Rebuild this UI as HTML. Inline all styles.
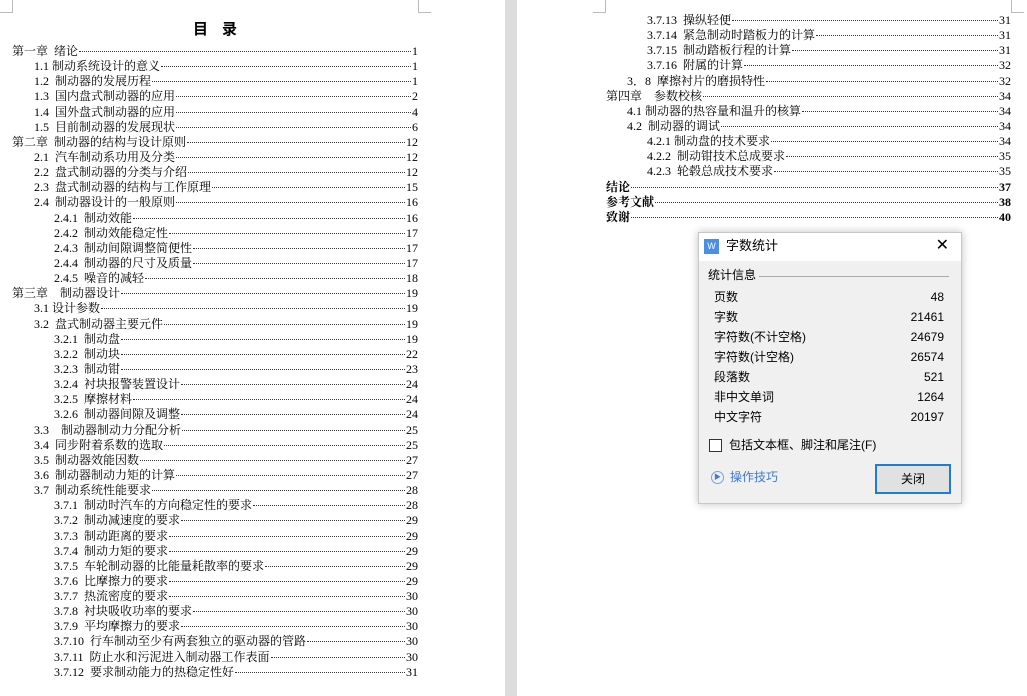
<!DOCTYPE html><html><head><meta charset="utf-8"><style>
body{margin:0;width:1027px;height:696px;overflow:hidden;background:#dcdcdc;font-family:"Liberation Serif","Noto Serif CJK SC","Noto Sans CJK SC",serif;font-size:12px;color:#000;position:relative}
.page{position:absolute;top:0;height:696px;background:#fff}
.toc{position:absolute}
.r{display:flex;height:15.15px;line-height:15.15px;white-space:nowrap;align-items:baseline}
.r .d{flex:1;border-bottom:1px dotted #333;margin:0 1px;transform:translateY(-3px)}
.mark{position:absolute;border-color:#bbb;border-style:solid;width:12px;height:12px}
.b{font-weight:bold}
.dlg{position:absolute;left:698px;top:232px;width:262px;height:270px;background:#f0f0f0;border:1px solid #c8c8c8;box-shadow:0 0 8px rgba(0,0,0,.25);font-family:"Liberation Sans","Noto Sans CJK SC",sans-serif;font-size:12px}
.dlg .t{height:28px;background:#fff;position:relative}
.row{position:absolute;left:15px;width:230px;display:flex;justify-content:space-between;align-items:baseline;line-height:16px}
</style></head><body>
<div class="page" style="left:0;width:505px">
<div class="mark" style="left:0;top:0;border-width:0 1px 1px 0"></div>
<div class="mark" style="left:418px;top:0;border-width:0 0 1px 1px"></div>
<div style="position:absolute;left:193px;top:18px;font-size:15px;font-weight:bold;font-family:'Noto Sans CJK SC',sans-serif;letter-spacing:14px">目录</div>
<div class="toc" style="left:12px;top:44px;width:406px">
<div class="r"><span>第一章&nbsp; 绪论</span><span class="d"></span>1</div>
<div class="r" style="padding-left:22px"><span>1.1 制动系统设计的意义</span><span class="d"></span>1</div>
<div class="r" style="padding-left:22px"><span>1.2&nbsp; 制动器的发展历程</span><span class="d"></span>1</div>
<div class="r" style="padding-left:22px"><span>1.3&nbsp; 国内盘式制动器的应用</span><span class="d"></span>2</div>
<div class="r" style="padding-left:22px"><span>1.4&nbsp; 国外盘式制动器的应用</span><span class="d"></span>4</div>
<div class="r" style="padding-left:22px"><span>1.5&nbsp; 目前制动器的发展现状</span><span class="d"></span>6</div>
<div class="r"><span>第二章&nbsp; 制动器的结构与设计原则</span><span class="d"></span>12</div>
<div class="r" style="padding-left:22px"><span>2.1&nbsp; 汽车制动系功用及分类</span><span class="d"></span>12</div>
<div class="r" style="padding-left:22px"><span>2.2&nbsp; 盘式制动器的分类与介绍</span><span class="d"></span>12</div>
<div class="r" style="padding-left:22px"><span>2.3&nbsp; 盘式制动器的结构与工作原理</span><span class="d"></span>15</div>
<div class="r" style="padding-left:22px"><span>2.4&nbsp; 制动器设计的一般原则</span><span class="d"></span>16</div>
<div class="r" style="padding-left:42px"><span>2.4.1&nbsp; 制动效能</span><span class="d"></span>16</div>
<div class="r" style="padding-left:42px"><span>2.4.2&nbsp; 制动效能稳定性</span><span class="d"></span>17</div>
<div class="r" style="padding-left:42px"><span>2.4.3&nbsp; 制动间隙调整简便性</span><span class="d"></span>17</div>
<div class="r" style="padding-left:42px"><span>2.4.4&nbsp; 制动器的尺寸及质量</span><span class="d"></span>17</div>
<div class="r" style="padding-left:42px"><span>2.4.5&nbsp; 噪音的减轻</span><span class="d"></span>18</div>
<div class="r"><span>第三章&nbsp;&nbsp;&nbsp; 制动器设计</span><span class="d"></span>19</div>
<div class="r" style="padding-left:22px"><span>3.1 设计参数</span><span class="d"></span>19</div>
<div class="r" style="padding-left:22px"><span>3.2&nbsp; 盘式制动器主要元件</span><span class="d"></span>19</div>
<div class="r" style="padding-left:42px"><span>3.2.1&nbsp; 制动盘</span><span class="d"></span>19</div>
<div class="r" style="padding-left:42px"><span>3.2.2&nbsp; 制动块</span><span class="d"></span>22</div>
<div class="r" style="padding-left:42px"><span>3.2.3&nbsp; 制动钳</span><span class="d"></span>23</div>
<div class="r" style="padding-left:42px"><span>3.2.4&nbsp; 衬块报警装置设计</span><span class="d"></span>24</div>
<div class="r" style="padding-left:42px"><span>3.2.5&nbsp; 摩擦材料</span><span class="d"></span>24</div>
<div class="r" style="padding-left:42px"><span>3.2.6&nbsp; 制动器间隙及调整</span><span class="d"></span>24</div>
<div class="r" style="padding-left:22px"><span>3.3&nbsp;&nbsp;&nbsp; 制动器制动力分配分析</span><span class="d"></span>25</div>
<div class="r" style="padding-left:22px"><span>3.4&nbsp; 同步附着系数的选取</span><span class="d"></span>25</div>
<div class="r" style="padding-left:22px"><span>3.5&nbsp; 制动器效能因数</span><span class="d"></span>27</div>
<div class="r" style="padding-left:22px"><span>3.6&nbsp; 制动器制动力矩的计算</span><span class="d"></span>27</div>
<div class="r" style="padding-left:22px"><span>3.7&nbsp; 制动系统性能要求</span><span class="d"></span>28</div>
<div class="r" style="padding-left:42px"><span>3.7.1&nbsp; 制动时汽车的方向稳定性的要求</span><span class="d"></span>28</div>
<div class="r" style="padding-left:42px"><span>3.7.2&nbsp; 制动减速度的要求</span><span class="d"></span>29</div>
<div class="r" style="padding-left:42px"><span>3.7.3&nbsp; 制动距离的要求</span><span class="d"></span>29</div>
<div class="r" style="padding-left:42px"><span>3.7.4&nbsp; 制动力矩的要求</span><span class="d"></span>29</div>
<div class="r" style="padding-left:42px"><span>3.7.5&nbsp; 车轮制动器的比能量耗散率的要求</span><span class="d"></span>29</div>
<div class="r" style="padding-left:42px"><span>3.7.6&nbsp; 比摩擦力的要求</span><span class="d"></span>29</div>
<div class="r" style="padding-left:42px"><span>3.7.7&nbsp; 热流密度的要求</span><span class="d"></span>30</div>
<div class="r" style="padding-left:42px"><span>3.7.8&nbsp; 衬块吸收功率的要求</span><span class="d"></span>30</div>
<div class="r" style="padding-left:42px"><span>3.7.9&nbsp; 平均摩擦力的要求</span><span class="d"></span>30</div>
<div class="r" style="padding-left:42px"><span>3.7.10&nbsp; 行车制动至少有两套独立的驱动器的管路</span><span class="d"></span>30</div>
<div class="r" style="padding-left:42px"><span>3.7.11&nbsp; 防止水和污泥进入制动器工作表面</span><span class="d"></span>30</div>
<div class="r" style="padding-left:42px"><span>3.7.12&nbsp; 要求制动能力的热稳定性好</span><span class="d"></span>31</div>
</div></div>
<div class="page" style="left:517px;width:510px">
<div class="mark" style="left:76px;top:0;border-width:0 1px 1px 0"></div>
<div class="mark" style="left:494px;top:0;border-width:0 0 1px 1px"></div>
<div class="toc" style="left:89px;top:13px;width:405px">
<div class="r" style="padding-left:41px"><span>3.7.13&nbsp; 操纵轻便</span><span class="d"></span>31</div>
<div class="r" style="padding-left:41px"><span>3.7.14&nbsp; 紧急制动时踏板力的计算</span><span class="d"></span>31</div>
<div class="r" style="padding-left:41px"><span>3.7.15&nbsp; 制动踏板行程的计算</span><span class="d"></span>31</div>
<div class="r" style="padding-left:41px"><span>3.7.16&nbsp; 附属的计算</span><span class="d"></span>32</div>
<div class="r" style="padding-left:21px"><span>3．8&nbsp; 摩擦衬片的磨损特性</span><span class="d"></span>32</div>
<div class="r"><span>第四章&nbsp;&nbsp;&nbsp; 参数校核</span><span class="d"></span>34</div>
<div class="r" style="padding-left:21px"><span>4.1 制动器的热容量和温升的核算</span><span class="d"></span>34</div>
<div class="r" style="padding-left:21px"><span>4.2&nbsp; 制动器的调试</span><span class="d"></span>34</div>
<div class="r" style="padding-left:41px"><span>4.2.1 制动盘的技术要求</span><span class="d"></span>34</div>
<div class="r" style="padding-left:41px"><span>4.2.2&nbsp; 制动钳技术总成要求</span><span class="d"></span>35</div>
<div class="r" style="padding-left:41px"><span>4.2.3&nbsp; 轮毂总成技术要求</span><span class="d"></span>35</div>
<div class="r b"><span>结论</span><span class="d"></span>37</div>
<div class="r b"><span>参考文献</span><span class="d"></span>38</div>
<div class="r b"><span>致谢</span><span class="d"></span>40</div>
</div></div>
<div class="dlg">
<div class="t"><div style="position:absolute;left:5px;top:6px;width:15px;height:15px;background:#4a8ee8;color:#fff;font-size:9px;line-height:15px;text-align:center">W</div>
<div style="position:absolute;left:27px;top:5px;font-size:13px;line-height:16px">字数统计</div>
<div style="position:absolute;right:12px;top:4px;font-size:16px;line-height:18px">✕</div></div>
<div style="position:absolute;left:9px;top:34px;line-height:16px">统计信息</div>
<div style="position:absolute;left:60px;right:12px;top:43px;border-top:1px solid #aaa"></div>
<div class="row" style="top:56px"><span>页数</span><span>48</span></div>
<div class="row" style="top:76px"><span>字数</span><span>21461</span></div>
<div class="row" style="top:96px"><span>字符数(不计空格)</span><span>24679</span></div>
<div class="row" style="top:116px"><span>字符数(计空格)</span><span>26574</span></div>
<div class="row" style="top:136px"><span>段落数</span><span>521</span></div>
<div class="row" style="top:156px"><span>非中文单词</span><span>1264</span></div>
<div class="row" style="top:176px"><span>中文字符</span><span>20197</span></div>
<div style="position:absolute;left:10px;top:206px;width:11px;height:11px;border:1px solid #333;background:#fff"></div>
<div style="position:absolute;left:30px;top:204px;line-height:16px">包括文本框、脚注和尾注(F)</div>
<div style="position:absolute;left:12px;top:238px;width:11px;height:11px;border:1px solid #7aa0d8;border-radius:50%;font-size:7px;line-height:11px;text-align:center;color:#4a7ad0">▶</div>
<div style="position:absolute;left:31px;top:236px;color:#3b78d8;line-height:16px">操作技巧</div>
<div style="position:absolute;left:176px;top:231px;width:72px;height:26px;border:2px solid #1e7bd6;background:#e1e1e1;text-align:center;line-height:26px">关闭</div>
</div>
</body></html>
